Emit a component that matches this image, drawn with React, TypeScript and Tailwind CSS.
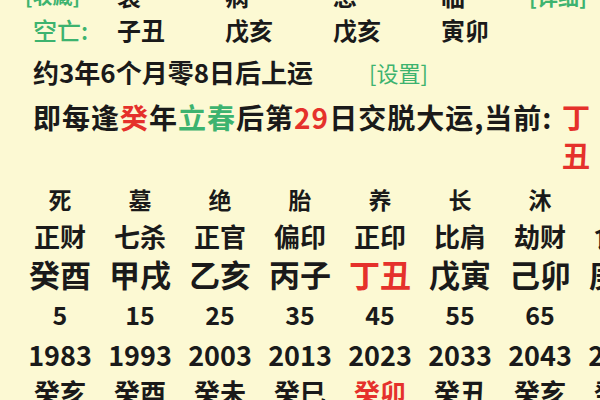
import React from "react";

type Col = { st: string; god: string; gz: string; age: string; year: string; ln: string };

const cols: Col[] = [
    { st: "死", god: "正财", gz: "癸酉", age: "5", year: "1983", ln: "癸亥" },
    { st: "墓", god: "七杀", gz: "甲戌", age: "15", year: "1993", ln: "癸酉" },
    { st: "绝", god: "正官", gz: "乙亥", age: "25", year: "2003", ln: "癸未" },
    { st: "胎", god: "偏印", gz: "丙子", age: "35", year: "2013", ln: "癸巳" },
    { st: "养", god: "正印", gz: "丁丑", age: "45", year: "2023", ln: "癸卯" },
    { st: "长", god: "比肩", gz: "戊寅", age: "55", year: "2033", ln: "癸丑" },
    { st: "沐", god: "劫财", gz: "己卯", age: "65", year: "2043", ln: "癸亥" },
    { st: "冠", god: "食神", gz: "庚辰", age: "75", year: "2053", ln: "癸酉" },
];

const CURRENT = 4;

export default function App() {
    return (
        <div className="w-[600px] h-[400px] overflow-hidden bg-[#fcf9d3] text-[#1a1a1a] font-['Noto_Sans_CJK_SC','Noto_Sans',sans-serif] leading-none">
            <div className="mt-[-20px] pl-[25px]">
                {/* top row, mostly scrolled off */}
                <div className="h-[32px] flex items-center text-[24px] font-semibold">
                    <span className="w-[92px] text-[20px] text-[#3db36f]">[收藏]</span>
                    <span className="w-[108px]">衰</span>
                    <span className="w-[108px]">病</span>
                    <span className="w-[108px]">息</span>
                    <span className="w-[88px]">临</span>
                    <span className="text-[21px] text-[#3db36f]">[详细]</span>
                </div>

                <div className="h-[36px] flex items-center text-[24px] font-semibold pl-[8px]">
                    <span className="w-[84px] font-medium text-[#3db36f]">空亡:</span>
                    <span className="w-[108px]">子丑</span>
                    <span className="w-[108px]">戊亥</span>
                    <span className="w-[108px]">戊亥</span>
                    <span className="w-[108px]">寅卯</span>
                </div>

                <div className="h-[48px] flex items-center pl-[8px]">
                    <span className="text-[26px] font-semibold">约3年6个月零8日后上运</span>
                    <span className="ml-[56px] text-[22px] text-[#3db36f]">[设置]</span>
                </div>

                <div className="h-[42px] flex items-center pl-[8px] pr-[10px] text-[28px] font-semibold">
                    <span className="whitespace-nowrap tracking-[1px]">
                        即每逢<span className="text-[#e5312b]">癸</span>年
                        <span className="text-[#3db36f]">立春</span>后第
                        <span className="text-[#e5312b]">29</span>日交脱大运,当前:
                    </span>
                    <span className="ml-auto shrink-0 text-[#e5312b]">丁</span>
                </div>
                <div className="h-[34px] flex items-center justify-end pr-[10px] text-[28px] font-semibold text-[#e5312b]">
                    丑
                </div>
            </div>

            <div className="mt-[9px] flex pl-[20px]">
                {cols.map((c, i) => (
                    <div key={i} className="w-[80px] shrink-0 flex flex-col items-center">
                        <div className="h-[36px] flex items-center text-[23px] font-semibold">{c.st}</div>
                        <div className="h-[38px] flex items-center text-[26px] font-semibold">{c.god}</div>
                        <div
                            className={
                                i === CURRENT
                                    ? "h-[36px] flex items-center text-[31px] font-bold text-[#e5312b]"
                                    : "h-[36px] flex items-center text-[31px] font-bold"
                            }
                        >
                            {c.gz}
                        </div>
                        <div className="h-[46px] flex items-center text-[25px] font-semibold">{c.age}</div>
                        <div className="h-[34px] flex items-center text-[27px] font-semibold">{c.year}</div>
                        <div
                            className={
                                i === CURRENT
                                    ? "h-[42px] flex items-center text-[26px] font-semibold text-[#e5312b]"
                                    : "h-[42px] flex items-center text-[26px] font-semibold"
                            }
                        >
                            {c.ln}
                        </div>
                    </div>
                ))}
            </div>
        </div>
    );
}
